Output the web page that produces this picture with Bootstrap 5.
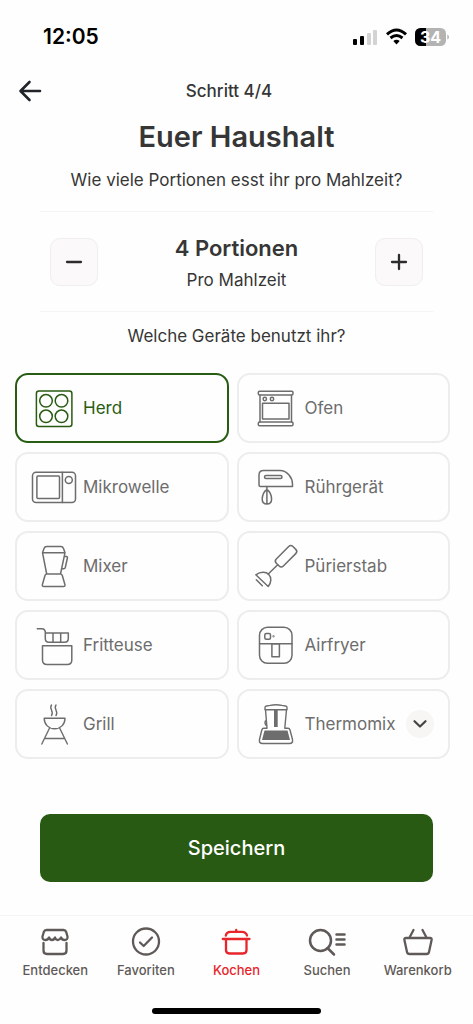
<!DOCTYPE html>
<html lang="de">
<head>
<meta charset="utf-8">
<meta name="viewport" content="width=device-width, initial-scale=1">
<title>Euer Haushalt</title>
<link href="https://cdn.jsdelivr.net/npm/bootstrap@5.3.0/dist/css/bootstrap.min.css" rel="stylesheet">
<script src="https://cdn.jsdelivr.net/npm/bootstrap@5.3.0/dist/js/bootstrap.bundle.min.js" defer></script>
<style>
  body { font-family: Inter, "Liberation Sans", sans-serif; font-size: 17px; line-height: 24px; color: #363636; background: #fefefe; }
  svg { display: block; flex: none; }
  .stroked { fill: none; stroke: currentColor; stroke-linecap: round; stroke-linejoin: round; }
  .status { height: 72px; padding: 2px 24px 0 43px; color: #000; }
  .clock { font-size: 21px; font-weight: 600; }
  .topbar { display: grid; grid-template-columns: 32px 1fr 32px; height: 38px; padding: 0 32px 0 17px; }
  .step-label { font-weight: 500; }
  .title { font-size: 29px; line-height: 38px; font-weight: 600; margin-top: 8px; }
  .question { margin-top: 12px; }
  .inset { margin-left: 40px; margin-right: 40px; }
  .stepper { margin-top: 19px; padding: 0 10px; height: 101px; border-top: 1px solid #f5f4f4; border-bottom: 1px solid #f5f4f4; }
  .step { width: 48px; height: 48px; border: 1px solid #f0eeef; border-radius: 10px; background: #fbf9fa; color: #2c2c2c; }
  .count { font-size: 22px; line-height: 32px; font-weight: 600; }
  .devices { display: grid; grid-template-columns: 1fr 1fr; gap: 9px 8px; margin: 25px 23px 0 15px; }
  .tile { display: flex; align-items: center; gap: 6px; height: 70px; padding-left: 14px; border: 2px solid #ededed; border-radius: 13px; color: #6d6d6d; cursor: pointer; }
  .btn-check:checked + .tile { border-color: #285c12; color: #285c12; }
  .more { right: 16px; top: 21px; width: 28px; height: 28px; background: #f7f6f5; color: #444; }
  .save { margin-top: 55px; height: 68px; border-radius: 10px; background: #285a13; color: #fff; font-size: 20px; font-weight: 500; }
  .save:hover { background: #1f480e; color: #fff; }
  .tabs { padding: 10px 10px 0; border-top: 1px solid #f5f4f4; height: 93px; font-size: 13px; line-height: 16px; font-weight: 500; }
  .tab { display: flex; flex: 1 1 0; flex-direction: column; align-items: center; gap: 4px; color: #5f5a58; text-decoration: none; }
  .tab.active { color: #e8252b; }
  .home { width: 169px; height: 6px; background: #000; margin-bottom: 10px; }
</style>
</head>
<body>
<div class="d-flex flex-column min-vh-100">
  <header>
    <div class="status d-flex align-items-center justify-content-between">
      <span class="clock">12:05</span>
      <svg width="97" height="20" viewBox="0 0 97 20" role="img" aria-label="Signal, WLAN, Akku 34 %">
        <rect x="1" y="12" width="4" height="6" rx="1"/>
        <rect x="8" y="9" width="4" height="9" rx="1"/>
        <rect x="15" y="6" width="4" height="12" rx="1" fill="#d3d3d3"/>
        <rect x="21" y="3" width="4" height="15" rx="1" fill="#d3d3d3"/>
        <g fill="none" stroke="#000" stroke-width="3"><path d="M35 7.3Q44.500-1.200 54 7.300"/><path d="M38.500 11Q44.500 6 50.500 11"/></g>
        <path d="M41.300 14Q44.500 11.500 47.700 14L44.500 17.500Z"/>
        <rect x="63" y="1" width="31" height="18" rx="5.500" fill="#b3b3b3"/>
        <path d="M74 1H68.500A5.500 5.500 0 0 0 63 6.500V13.500A5.500 5.500 0 0 0 68.500 19H74Z"/>
        <path d="M95.300 7.500Q97 8 97 10T95.300 12.500Z" fill="#b3b3b3"/>
        <text x="78.500" y="15.700" text-anchor="middle" font-size="16" font-weight="700" fill="#fff">34</text>
      </svg>
    </div>
    <div class="topbar align-items-center">
      <button type="button" class="btn p-0 border-0" aria-label="Zurück">
        <svg class="stroked" width="26" height="24" viewBox="0 0 26 24" stroke="#363636" stroke-width="2.600"><path d="M23 12H4M12.500 3L3.500 12L12.500 21"/></svg>
      </button>
      <span class="step-label text-center">Schritt 4/4</span>
    </div>
  </header>

  <main class="flex-grow-1">
    <h1 class="title text-center mb-0">Euer Haushalt</h1>
    <p class="question text-center mb-0">Wie viele Portionen esst ihr pro Mahlzeit?</p>
    <div class="stepper inset d-flex align-items-center justify-content-between">
      <button type="button" class="step btn p-0 d-flex align-items-center justify-content-center" aria-label="Weniger">
        <svg class="stroked" width="18" height="18" viewBox="0 0 18 18" stroke-width="2.300"><path d="M2 9H16"/></svg>
      </button>
      <div class="text-center"><div class="count">4 Portionen</div><div class="mt-1">Pro Mahlzeit</div></div>
      <button type="button" class="step btn p-0 d-flex align-items-center justify-content-center" aria-label="Mehr">
        <svg class="stroked" width="18" height="18" viewBox="0 0 18 18" stroke-width="2.300"><path d="M2 9H16M9 2V16"/></svg>
      </button>
    </div>
    <p class="question text-center mb-0">Welche Geräte benutzt ihr?</p>

    <div class="devices">
      <div><input class="btn-check" type="checkbox" id="herd" checked>
        <label class="tile" for="herd"><svg class="stroked" width="46" height="46" stroke-width="1.500"><rect x="5.400" y="6" width="35.500" height="35.500" rx="2.500"/><circle cx="15" cy="15.800" r="6.300"/><circle cx="30.500" cy="15.800" r="6.300"/><circle cx="15" cy="31.300" r="6.300"/><circle cx="30.500" cy="31.300" r="6.300"/></svg>Herd</label></div>
      <div><input class="btn-check" type="checkbox" id="ofen">
        <label class="tile" for="ofen"><svg class="stroked" width="46" height="46" stroke-width="1.500"><rect x="5.300" y="6.200" width="34.700" height="3.800" rx="1.300"/><rect x="5.300" y="37" width="34.700" height="3.800" rx="1.300"/><path d="M7 10V37M38.500 10V37"/><circle cx="11.800" cy="14" r="1.700"/><circle cx="19" cy="14" r="1.700"/><rect x="9.500" y="18.300" width="26.500" height="15.700"/></svg>Ofen</label></div>
      <div><input class="btn-check" type="checkbox" id="mikrowelle">
        <label class="tile" for="mikrowelle"><svg class="stroked" width="46" height="46" stroke-width="1.500"><rect x="1.500" y="8.200" width="43" height="30.300" rx="3.500"/><rect x="5.900" y="12" width="22.600" height="22.600" rx="1"/><path d="M31.400 8.200V38.500"/><circle cx="37.800" cy="16" r="3.500"/></svg>Mikrowelle</label></div>
      <div><input class="btn-check" type="checkbox" id="ruehrgeraet">
        <label class="tile" for="ruehrgeraet"><svg class="stroked" width="46" height="46" stroke-width="1.500"><path d="M10.500 6.500H27C34.500 6.500 39.500 14 39.500 20V22.500H7.500Q6 22.500 6 21V11Q6 6.500 10.500 6.500Z"/><rect x="11.500" y="11.500" width="17.500" height="3" rx="1.500"/><path d="M13.900 22.500V40M13.900 25.500C11.500 26.500 9.200 31 9.200 35C9.200 38.500 11 40 13.900 40S18.600 38.500 18.600 35C18.600 31 16.300 26.500 13.900 25.500Z"/></svg>Rührgerät</label></div>
      <div><input class="btn-check" type="checkbox" id="mixer">
        <label class="tile" for="mixer"><svg class="stroked" width="46" height="46" stroke-width="1.500"><path d="M11.500 9.700L13 5.500Q13.800 3.500 15.500 3.500H30Q31.700 3.500 32.500 5.500L34 9.700ZM11.500 9.700L15.700 31H29.500L34 9.700M15.700 31Q14.500 31 14 32.500L11.400 41.500Q10.900 43.500 13 43.500H32.300Q34.400 43.500 33.900 41.500L31.300 32.500Q30.700 31 29.500 31M33.300 13.500H35.500Q36.700 13.500 36.400 15L34.300 24.500Q34 25.700 32.700 25.700H30.700"/></svg>Mixer</label></div>
      <div><input class="btn-check" type="checkbox" id="puerierstab">
        <label class="tile" for="puerierstab"><svg class="stroked" width="46" height="46" stroke-width="1.500"><rect x="21.300" y="8.300" width="23.500" height="10" rx="3" transform="rotate(-45 33 13.300)"/><path d="M24.700 21.700L15 31.300M2.800 31.800C7.500 28.500 13 28.500 15.800 31.500C18.700 34.500 18.500 39.500 15.200 43.500ZM3.300 36.800L9.300 42.800"/></svg>Pürierstab</label></div>
      <div><input class="btn-check" type="checkbox" id="fritteuse">
        <label class="tile" for="fritteuse"><svg class="stroked" width="46" height="46" stroke-width="1.500"><path d="M6.300 6.700H11Q13.500 6.700 14.300 9.500V16.500Q14.300 20.300 18 20.300H33.500Q37.300 20.300 37.300 16.500V11H14.300M22 11V20.300M29.700 11V20.300"/><path d="M11.500 23.800H40.800V38Q40.800 42.500 36.300 42.500H16Q11.500 42.500 11.500 38Z"/></svg>Fritteuse</label></div>
      <div><input class="btn-check" type="checkbox" id="airfryer">
        <label class="tile" for="airfryer"><svg class="stroked" width="46" height="46" stroke-width="1.500"><rect x="6.500" y="5.300" width="32.500" height="36" rx="8"/><path d="M6.500 21.700H39"/><rect x="11.800" y="11.500" width="5.700" height="5.700" rx="1.500"/><rect x="18.900" y="21.700" width="7.500" height="13"/><circle cx="20.500" cy="14.300" r=".4"/></svg>Airfryer</label></div>
      <div><input class="btn-check" type="checkbox" id="grill">
        <label class="tile" for="grill"><svg class="stroked" width="46" height="46" stroke-width="1.400"><path d="M13.200 17.300H34C34 23.500 29.500 27.800 23.600 27.800S13.200 23.500 13.200 17.300ZM18.700 26.800L10.800 43M28.500 26.800L36.400 43M13.600 37.500H33.600"/><path d="M20.500 4C17.500 7.500 23.500 10.500 20.500 14.500M25 4C22 7.500 28 10.500 25 14.500"/></svg>Grill</label></div>
      <div class="position-relative"><input class="btn-check" type="checkbox" id="thermomix">
        <label class="tile" for="thermomix"><svg class="stroked" width="46" height="46" stroke-width="1.400"><path d="M12 8.800V6.500Q12 5.300 13.500 5L17 4.400Q23 3.200 29 4.400L32.500 5Q34 5.300 34 6.500V8.800ZM12.500 8.800L14 27M33.500 8.800L31.800 27M12.300 20Q11.300 22 12.700 24M14 27.300H10.800Q9.300 27.300 8.800 29L6.500 38.500Q5.800 42.500 9.500 42.500H36.500Q40.200 42.500 39.500 38.500L37 29Q36.500 27.300 35 27.300H31.800"/><path fill="currentColor" stroke="none" d="M21 9H24.700V26H21ZM11.500 29.600H34.500L37 39H9Z"/></svg>Thermomix</label>
        <button type="button" class="more btn p-0 border-0 rounded-circle position-absolute d-flex align-items-center justify-content-center" aria-label="Thermomix-Modell wählen"><svg class="stroked" width="16" height="16" viewBox="0 0 16 16" stroke-width="2.200"><path d="M2.500 5.200L8 10.500L13.500 5.200"/></svg></button></div>
    </div>
    <div class="inset"><button type="button" class="save btn w-100 border-0">Speichern</button></div>
  </main>

  <nav class="tabs d-flex" aria-label="Hauptmenü">
    <a class="tab" href="#"><svg class="stroked" width="32" height="32" viewBox="0 0 32 32" stroke-width="2.300"><path d="M7.500 4H24.500Q26.500 4 27.200 6L28.500 10.500Q29 14 25.500 14Q23 14 22 11.500Q20.800 14 18.800 14T16 11.500Q15 14 13 14T10 11.500Q9 14 6.500 14Q3 14 3.500 10.500L4.800 6Q5.500 4 7.500 4ZM4.500 17V24.500Q4.500 28 8 28H24Q27.500 28 27.500 24.500V17"/></svg>Entdecken</a>
    <a class="tab" href="#"><svg class="stroked" width="32" height="32" viewBox="0 0 32 32" stroke-width="2.300"><circle cx="16" cy="15.500" r="13"/><path d="M10 16.500L13.700 20L22 11.500"/></svg>Favoriten</a>
    <a class="tab active" href="#" aria-current="page"><svg class="stroked" width="32" height="32" viewBox="0 0 32 32" stroke-width="2.300"><path d="M2.800 13H29.500M6 13V24Q6 27.500 9.500 27.500H23Q26.500 27.500 26.500 24V13M5.800 9.500Q6.500 5.800 10.500 5.800H22Q26 5.800 27 9.500M16.200 4V5.800" /></svg>Kochen</a>
    <a class="tab" href="#"><svg class="stroked" width="38" height="32" viewBox="0 0 38 32" stroke-width="2.500"><circle cx="12.500" cy="14.500" r="10.500"/><path d="M19.500 22L26 28.500M28.500 8.500H36.500M28.500 13.500H36.500M28.500 18.500H36.500"/></svg>Suchen</a>
    <a class="tab" href="#"><svg class="stroked" width="32" height="32" viewBox="0 0 32 32" stroke-width="2.300"><path d="M4 12H28Q30 12 29.600 14L27 26Q26.600 28 24.500 28H7.500Q5.400 28 5 26L2.400 14Q2 12 4 12ZM7.500 11.500L11.500 4M24.500 11.500L20.500 4"/></svg>Warenkorb</a>
  </nav>
  <div class="home rounded-pill mx-auto"></div>
</div>
</body>
</html>
